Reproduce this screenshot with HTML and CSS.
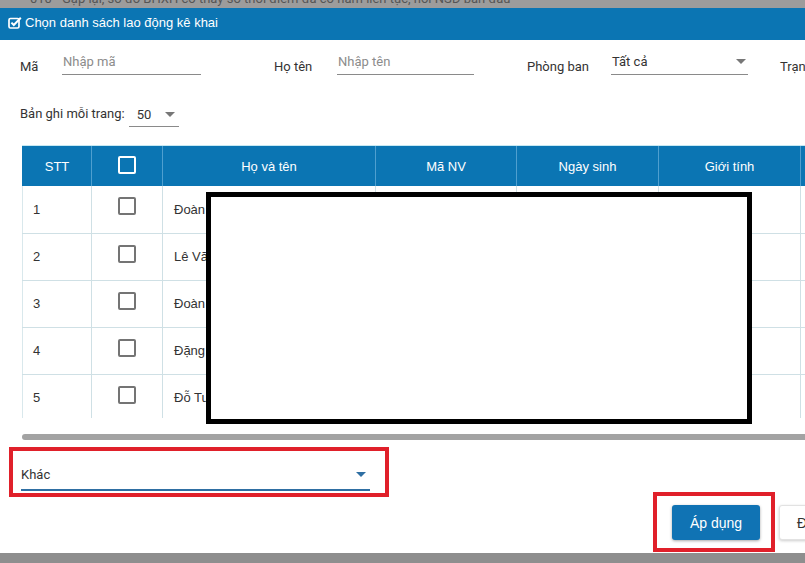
FILE: index.html
```html
<!DOCTYPE html>
<html lang="vi">
<head>
    <meta charset="UTF-8">
    <meta name="viewport" content="width=device-width, initial-scale=1.0">
    <title>Chọn danh sách lao động kê khai</title>
<link rel="stylesheet" href="styles.css">
</head>
<body>

    <!-- page behind the dialog -->
    <div class="backdrop-line">
        <span>010 - Gặp lại, sơ đồ BHXH có thấy sơ thời điểm đã có nắm liên tục, nơi NSĐ bàn đầu</span>
    </div>

    <div class="modal">
        <div class="modal-header">
            <svg class="title-icon" width="14" height="13" viewBox="0 0 14 13">
                <rect x="1" y="2.5" width="10" height="9.5" rx="1.5" fill="none" stroke="#fff" stroke-width="1.7"/>
                <path d="M3.4 6.6 L5.8 9 L12.8 1.8" fill="none" stroke="#fff" stroke-width="2"/>
            </svg>
            <span>Chọn danh sách lao động kê khai</span>
        </div>

        <div class="filters">
            <label class="f-label w-ma">Mã</label>
            <div class="f-input w-139">Nhập mã</div>
            <label class="f-label w-hoten">Họ tên</label>
            <div class="f-input w-137">Nhập tên</div>
            <label class="f-label w-phong">Phòng ban</label>
            <div class="f-input f-select w-137"><span class="val">Tất cả</span><span class="caret"></span></div>
            <label class="f-label">Trạng thái</label>
        </div>

        <div class="per-page">
            <label>Bản ghi mỗi trang:</label>
            <div class="pp-select"><span>50</span><span class="caret"></span></div>
        </div>

        <div class="grid-area">
            <div class="table-wrap">
                <table class="emp-table">
                    <colgroup>
                        <col style="width:69px">
                        <col style="width:71px">
                        <col style="width:213px">
                        <col style="width:141px">
                        <col style="width:142px">
                        <col style="width:142px">
                        <col style="width:120px">
                    </colgroup>
                    <thead>
                        <tr>
                            <th>STT</th>
                            <th><span class="cb cb-head"></span></th>
                            <th>Họ và tên</th>
                            <th>Mã NV</th>
                            <th>Ngày sinh</th>
                            <th>Giới tính</th>
                            <th>Chức vụ</th>
                        </tr>
                    </thead>
                    <tbody>
                        <tr><td>1</td><td class="c"><span class="cb"></span></td><td>Đoàn</td><td></td><td></td><td></td><td></td></tr>
                        <tr><td>2</td><td class="c"><span class="cb"></span></td><td>Lê Văn</td><td></td><td></td><td></td><td></td></tr>
                        <tr><td>3</td><td class="c"><span class="cb"></span></td><td>Đoàn</td><td></td><td></td><td></td><td></td></tr>
                        <tr><td>4</td><td class="c"><span class="cb"></span></td><td>Đặng</td><td></td><td></td><td></td><td></td></tr>
                        <tr><td>5</td><td class="c"><span class="cb"></span></td><td>Đỗ Tuấn</td><td></td><td></td><td></td><td></td></tr>
                    </tbody>
                </table>
            </div>
            <div class="hscroll"></div>
            <!-- redacted block -->
            <div class="redact"></div>
        </div>

        <div class="mark select-mark">
            <div class="b-select">
                <span>Khác</span>
                <span class="caret caret-blue"></span>
            </div>
        </div>

        <div class="footer">
            <div class="mark btn-mark">
                <button class="btn btn-primary">Áp dụng</button>
            </div>
            <button class="btn btn-default">Đóng</button>
        </div>
    </div>

</body>
</html>
```

FILE: styles.css
```css
* {
    margin: 0;
    padding: 0;
    box-sizing: border-box;
}

body {
    font-family: Roboto, "Liberation Sans", Arial, sans-serif;
    font-size: 13px;
    color: #333;
    background-color: #8e8e8e;
    height: 563px;
    overflow: hidden;
}

.backdrop-line {
    height: 8px;
    overflow: hidden;
    background-color: #9c9c9c;
    color: #555;
    font-size: 13px;
    line-height: 16px;
    padding-left: 30px;
    white-space: nowrap;
}

.backdrop-line span {
    display: block;
    margin-top: -9px;
}

.modal {
    background-color: #fff;
    width: 900px;
    padding-bottom: 1px;
}

.modal-header {
    height: 32px;
    background-color: #0b75b3;
    color: #fff;
    font-family: "Liberation Sans", Arial, sans-serif;
    font-size: 13px;
    display: flex;
    align-items: center;
    padding: 0 0 3px 8px;
}

.title-icon {
    margin-right: 3px;
}

/* filter row */
.filters {
    display: flex;
    align-items: flex-end;
    padding-left: 20px;
    margin-top: 10px;
    height: 25px;
    white-space: nowrap;
}

.f-label {
    line-height: 16px;
    color: #333;
}

.w-ma { width: 42px; }
.w-hoten { width: 63px; margin-left: 73px; }
.w-phong { width: 84px; margin-left: 53px; }
.f-select + .f-label { margin-left: 32px; }

.f-input {
    height: 25px;
    line-height: 16px;
    padding: 4px 0 5px 1px;
    border-bottom: 1px solid #8a8a8a;
    color: #8c8c8c;
}

.w-139 { width: 139px; }
.w-137 { width: 137px; }

.f-select {
    display: flex;
    justify-content: space-between;
    align-items: center;
    color: #333;
    padding-right: 2px;
}

.caret {
    width: 0;
    height: 0;
    border-left: 5px solid transparent;
    border-right: 5px solid transparent;
    border-top: 5px solid #777;
}

/* per page */
.per-page {
    display: flex;
    align-items: flex-end;
    gap: 4px;
    padding-left: 20px;
    margin-top: 29px;
}

.per-page label {
    line-height: 16px;
    margin-bottom: 5px;
}

.pp-select {
    width: 50px;
    height: 23px;
    display: flex;
    align-items: center;
    justify-content: space-between;
    padding: 0 4px 1px 8px;
    border-bottom: 1px solid #8a8a8a;
}

/* table */
.grid-area {
    position: relative;
    margin: 18px 0 0 22px;
}

.table-wrap {
    height: 273px;
    overflow: hidden;
    border-top: 1px solid #c6e9f3;
}

.emp-table {
    border-collapse: collapse;
    table-layout: fixed;
    width: 898px;
    font-family: "Liberation Sans", Arial, sans-serif;
    font-size: 13px;
}

.emp-table th {
    height: 40px;
    background-color: #0b75b3;
    color: #fff;
    font-weight: normal;
    text-align: center;
    border-left: 1px solid #4f9fcf;
}

.emp-table th:first-child,
.emp-table td:first-child {
    border-left: 1px solid #d9e8ec;
}

.emp-table th:first-child {
    border-left-color: #0b75b3;
}

.emp-table td {
    height: 47px;
    padding-left: 10px;
    border-left: 1px solid #cfe0e5;
    border-bottom: 1px solid #cfe0e5;
    color: #333;
}

.emp-table td:nth-child(3) {
    padding-left: 11px;
}

.emp-table td.c {
    text-align: center;
    padding-left: 0;
}

.cb {
    display: inline-block;
    width: 18px;
    height: 18px;
    border: 2px solid #747474;
    border-radius: 2px;
    vertical-align: middle;
    margin-bottom: 6px;
}

.cb-head {
    border-color: #fff;
    margin: 0 0 2px 0;
}

.hscroll {
    height: 6px;
    margin-top: 16px;
    background-color: #a3a3a3;
    border-radius: 3px;
}

.redact {
    position: absolute;
    left: 184px;
    top: 47px;
    width: 546px;
    height: 232px;
    background-color: #fff;
    border: 5px solid #000;
}

/* red annotation boxes */
.mark {
    border: 4px solid #e0202a;
}

.select-mark {
    width: 380px;
    height: 50px;
    margin: 7px 0 0 9px;
    padding: 16px 15px 0 8px;
}

.b-select {
    height: 24px;
    display: flex;
    justify-content: space-between;
    align-items: flex-start;
    line-height: 16px;
    font-size: 13px;
    color: #333;
    padding: 0 4px 6px 0;
    border-bottom: 2px solid #2f6fa3;
}

.caret-blue {
    margin-top: 5px;
    border-top-color: #2f6fa3;
}

.footer {
    display: flex;
    align-items: flex-start;
    margin: -5px 0 0 653px;
}

.btn-mark {
    width: 122px;
    height: 60px;
    padding: 9px 0 0 15px;
}

.btn {
    font-family: "Liberation Sans", Arial, sans-serif;
    font-size: 14px;
    height: 35px;
    border-radius: 3px;
    cursor: pointer;
}

.btn-primary {
    width: 88px;
    background-color: #1073b4;
    color: #fff;
    border: none;
    box-shadow: 0 1px 3px rgba(0, 0, 0, 0.35);
}

.btn-default {
    margin: 13px 0 0 4px;
    padding: 0 17px;
    background-color: #fff;
    color: #333;
    border: 1px solid #e2e2e2;
    box-shadow: 0 1px 3px rgba(0, 0, 0, 0.2);
}
```
